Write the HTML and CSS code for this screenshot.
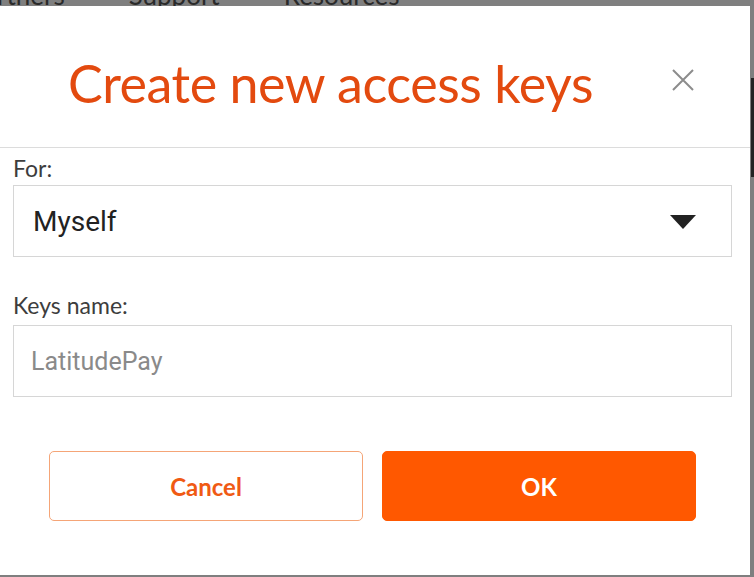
FILE: index.html
```html
<!DOCTYPE html>
<html lang="en">
<head>
<meta charset="utf-8">
<title>Create new access keys</title>
<link rel="stylesheet" href="styles.css">
</head>
<body>
<div class="page">
  <nav class="nav">
    <span class="nav-item nav-partners">rtners</span>
    <span class="nav-item">Support</span>
    <span class="nav-item">Resources</span>
  </nav>
  <div class="stage">
    <div class="modal" role="dialog" aria-labelledby="dlg-title">
      <header class="modal-header">
        <h1 id="dlg-title" class="modal-title">Create new access keys</h1>
        <button class="close" aria-label="Close">
          <svg width="24" height="24" viewBox="0 0 24 24" aria-hidden="true">
            <path d="M2 2 L22 22 M22 2 L2 22" stroke="#8c8c8c" stroke-width="2" fill="none"/>
          </svg>
        </button>
      </header>
      <div class="modal-body">
        <label class="field-label">For:</label>
        <div class="select">
          <span class="select-value">Myself</span>
          <span class="caret"></span>
        </div>
        <label class="field-label field-label-second">Keys name:</label>
        <div class="input">
          <span class="placeholder">LatitudePay</span>
        </div>
        <div class="actions">
          <button class="btn btn-cancel">Cancel</button>
          <button class="btn btn-ok">OK</button>
        </div>
      </div>
    </div>
    <div class="rail"><div class="thumb"></div></div>
  </div>
</div>
</body>
</html>
```
FILE: styles.css
```css
html, body {
  margin: 0;
  padding: 0;
}
body {
  width: 754px;
  height: 577px;
  overflow: hidden;
  background: #7f7f7f;
  font-family: Lato, "Open Sans", sans-serif;
}
.page {
  display: flex;
  flex-direction: column;
}
.nav {
  height: 6px;
  overflow: hidden;
  display: flex;
  align-items: flex-end;
  gap: 64px;
}
.nav-item {
  font-family: Lato, sans-serif;
  font-size: 26px;
  line-height: 26px;
  color: #2a2a2a;
  margin-bottom: -2px;
}
.nav-partners {
  margin-left: -3px;
}
.stage {
  display: flex;
  height: 569px;
}
.modal {
  width: 750px;
  height: 569px;
  background: #ffffff;
  display: flex;
  flex-direction: column;
}
.rail {
  width: 4px;
}
.thumb {
  margin-top: 72px;
  margin-left: 1px;
  width: 3px;
  height: 99px;
  background: #232323;
}
.modal-header {
  display: flex;
  align-items: flex-start;
  justify-content: space-between;
  padding: 47px 55px 34px 68px;
  border-bottom: 1px solid #dcdcdc;
}
.modal-title {
  margin: 0;
  font-family: Lato, sans-serif;
  font-weight: 400;
  font-size: 52px;
  line-height: 60px;
  letter-spacing: -0.45px;
  color: #e34a0f;
}
.close {
  margin: 15px 0 0 0;
  padding: 0;
  border: 0;
  background: transparent;
  width: 24px;
  height: 24px;
  display: flex;
}
.modal-body {
  display: flex;
  flex-direction: column;
  padding: 0 18px 0 13px;
}
.field-label {
  font-family: Lato, sans-serif;
  font-size: 23px;
  line-height: 28px;
  color: #3d3d3d;
  margin-top: 6px;
  margin-bottom: 3px;
}
.field-label-second {
  margin-top: 34px;
  margin-bottom: 6px;
}
.select, .input {
  height: 70px;
  border: 1px solid #d6d6d6;
  display: flex;
  align-items: center;
}
.select {
  justify-content: space-between;
  padding: 0 35px 0 19px;
}
.select-value {
  font-family: Roboto, sans-serif;
  font-size: 28px;
  color: #222222;
}
.caret {
  width: 0;
  height: 0;
  border-left: 13px solid transparent;
  border-right: 13px solid transparent;
  border-top: 14px solid #222222;
  margin-top: 2px;
}
.input {
  padding: 0 17px;
}
.placeholder {
  font-family: Roboto, sans-serif;
  font-size: 25px;
  color: #8a8a8a;
}
.actions {
  display: flex;
  gap: 19px;
  margin: 54px 36px 0 36px;
}
.btn {
  flex: 1;
  height: 70px;
  border-radius: 5px;
  font-family: Lato, sans-serif;
  font-weight: 700;
  font-size: 24px;
  cursor: pointer;
}
.btn-cancel {
  background: #ffffff;
  border: 1px solid #f5a577;
  color: #f05a14;
}
.btn-ok {
  background: #ff5800;
  border: 1px solid #ff5800;
  color: #ffffff;
}
```
